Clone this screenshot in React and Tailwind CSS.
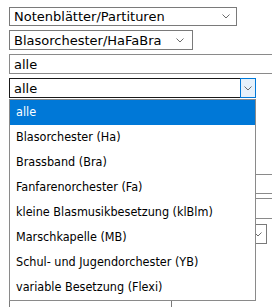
import React from 'react';

function Chevron({ className = '' }) {
    return (
        <svg width="8" height="5" viewBox="0 0 8 5" className={className}>
            <polyline points="0.5,0.5 4,4 7.5,0.5" fill="none" stroke="#6b6b6b" strokeWidth="1" />
        </svg>
    );
}

function FakeSelect({ value, width, height = 'h-[20px]', focused = false, chevronArea = 'w-[24px]' }) {
    return (
        <div
            className={`flex items-stretch bg-white border ${focused ? 'border-[#1a1a1a]' : 'border-[#7a7a7a]'} ${width} ${height}`}
        >
            <div className="flex-1 flex items-center pl-[4px] text-[13px] leading-none text-black whitespace-nowrap overflow-hidden">
                {value}
            </div>
            {focused ? (
                <div className="w-[16px] flex items-center justify-center bg-[#e5f1fb] border border-[#0078d7] -my-px -mr-px">
                    <Chevron />
                </div>
            ) : (
                <div className={`${chevronArea} flex items-center justify-center`}>
                    <Chevron />
                </div>
            )}
        </div>
    );
}

export default function App() {
    const options = [
        'alle',
        'Blasorchester (Ha)',
        'Brassband (Bra)',
        'Fanfarenorchester (Fa)',
        'kleine Blasmusikbesetzung (klBlm)',
        'Marschkapelle (MB)',
        'Schul- und Jugendorchester (YB)',
        'variable Besetzung (Flexi)',
    ];

    return (
        <div className="w-[272px] h-[307px] overflow-hidden bg-white font-['DejaVu_Sans',sans-serif]">
            <div className="pt-[7px] pl-[9px] flex flex-col items-start">
                <FakeSelect value="Notenblätter/Partituren" width="w-[228px]" height="h-[19px]" chevronArea="w-[20px]" />
                <div className="mt-[4px]">
                    <FakeSelect value="Blasorchester/HaFaBra" width="w-[184px]" chevronArea="w-[24px]" />
                </div>
                <div className="mt-[4px] w-[300px] h-[20px] border border-[#8a8a8a] bg-white flex items-center pl-[4px] text-[13px] leading-none">
                    alle
                </div>

                {/* open select with its list */}
                <div className="mt-[4px] relative">
                    <FakeSelect value="alle" width="w-[247px]" focused />
                    <div className="absolute left-0 top-full mt-px w-[247px] bg-white border border-[#8a8a8a] z-10 font-['DejaVu_Sans_Condensed','DejaVu_Sans',sans-serif] text-[12.5px]">
                        {options.map((o, i) => (
                            <div
                                key={o}
                                className={`h-[25px] flex items-center pl-[6px] whitespace-nowrap ${i === 0 ? 'bg-[#0078d7] text-white' : 'text-black'}`}
                            >
                                {o}
                            </div>
                        ))}
                    </div>
                </div>

                {/* fields behind the open list */}
                <div className="mt-[4px] w-[200px] h-[20px] border border-[#8a8a8a]" />
                <div className="mt-[4px] w-[200px] h-[20px] border border-[#8a8a8a]" />
                <div className="mt-[4px] w-[200px] h-[20px] border border-[#8a8a8a]" />
                <div className="mt-[4px] w-[300px] h-[20px] border border-[#8a8a8a]" />
                <div className="mt-[4px] w-[300px] h-[21px] border border-[#8a8a8a]" />
                <div className="mt-[5px]">
                    <FakeSelect value="" width="w-[258px]" chevronArea="w-[16px]" />
                </div>
                <div className="mt-[4px] w-[200px] h-[20px] border border-[#8a8a8a]" />
                <div className="mt-[4px] w-[200px] h-[20px] border border-[#8a8a8a]" />
                <div className="mt-[6px] w-[163px] h-[20px] border border-[#7a7a7a]" />
            </div>
        </div>
    );
}
